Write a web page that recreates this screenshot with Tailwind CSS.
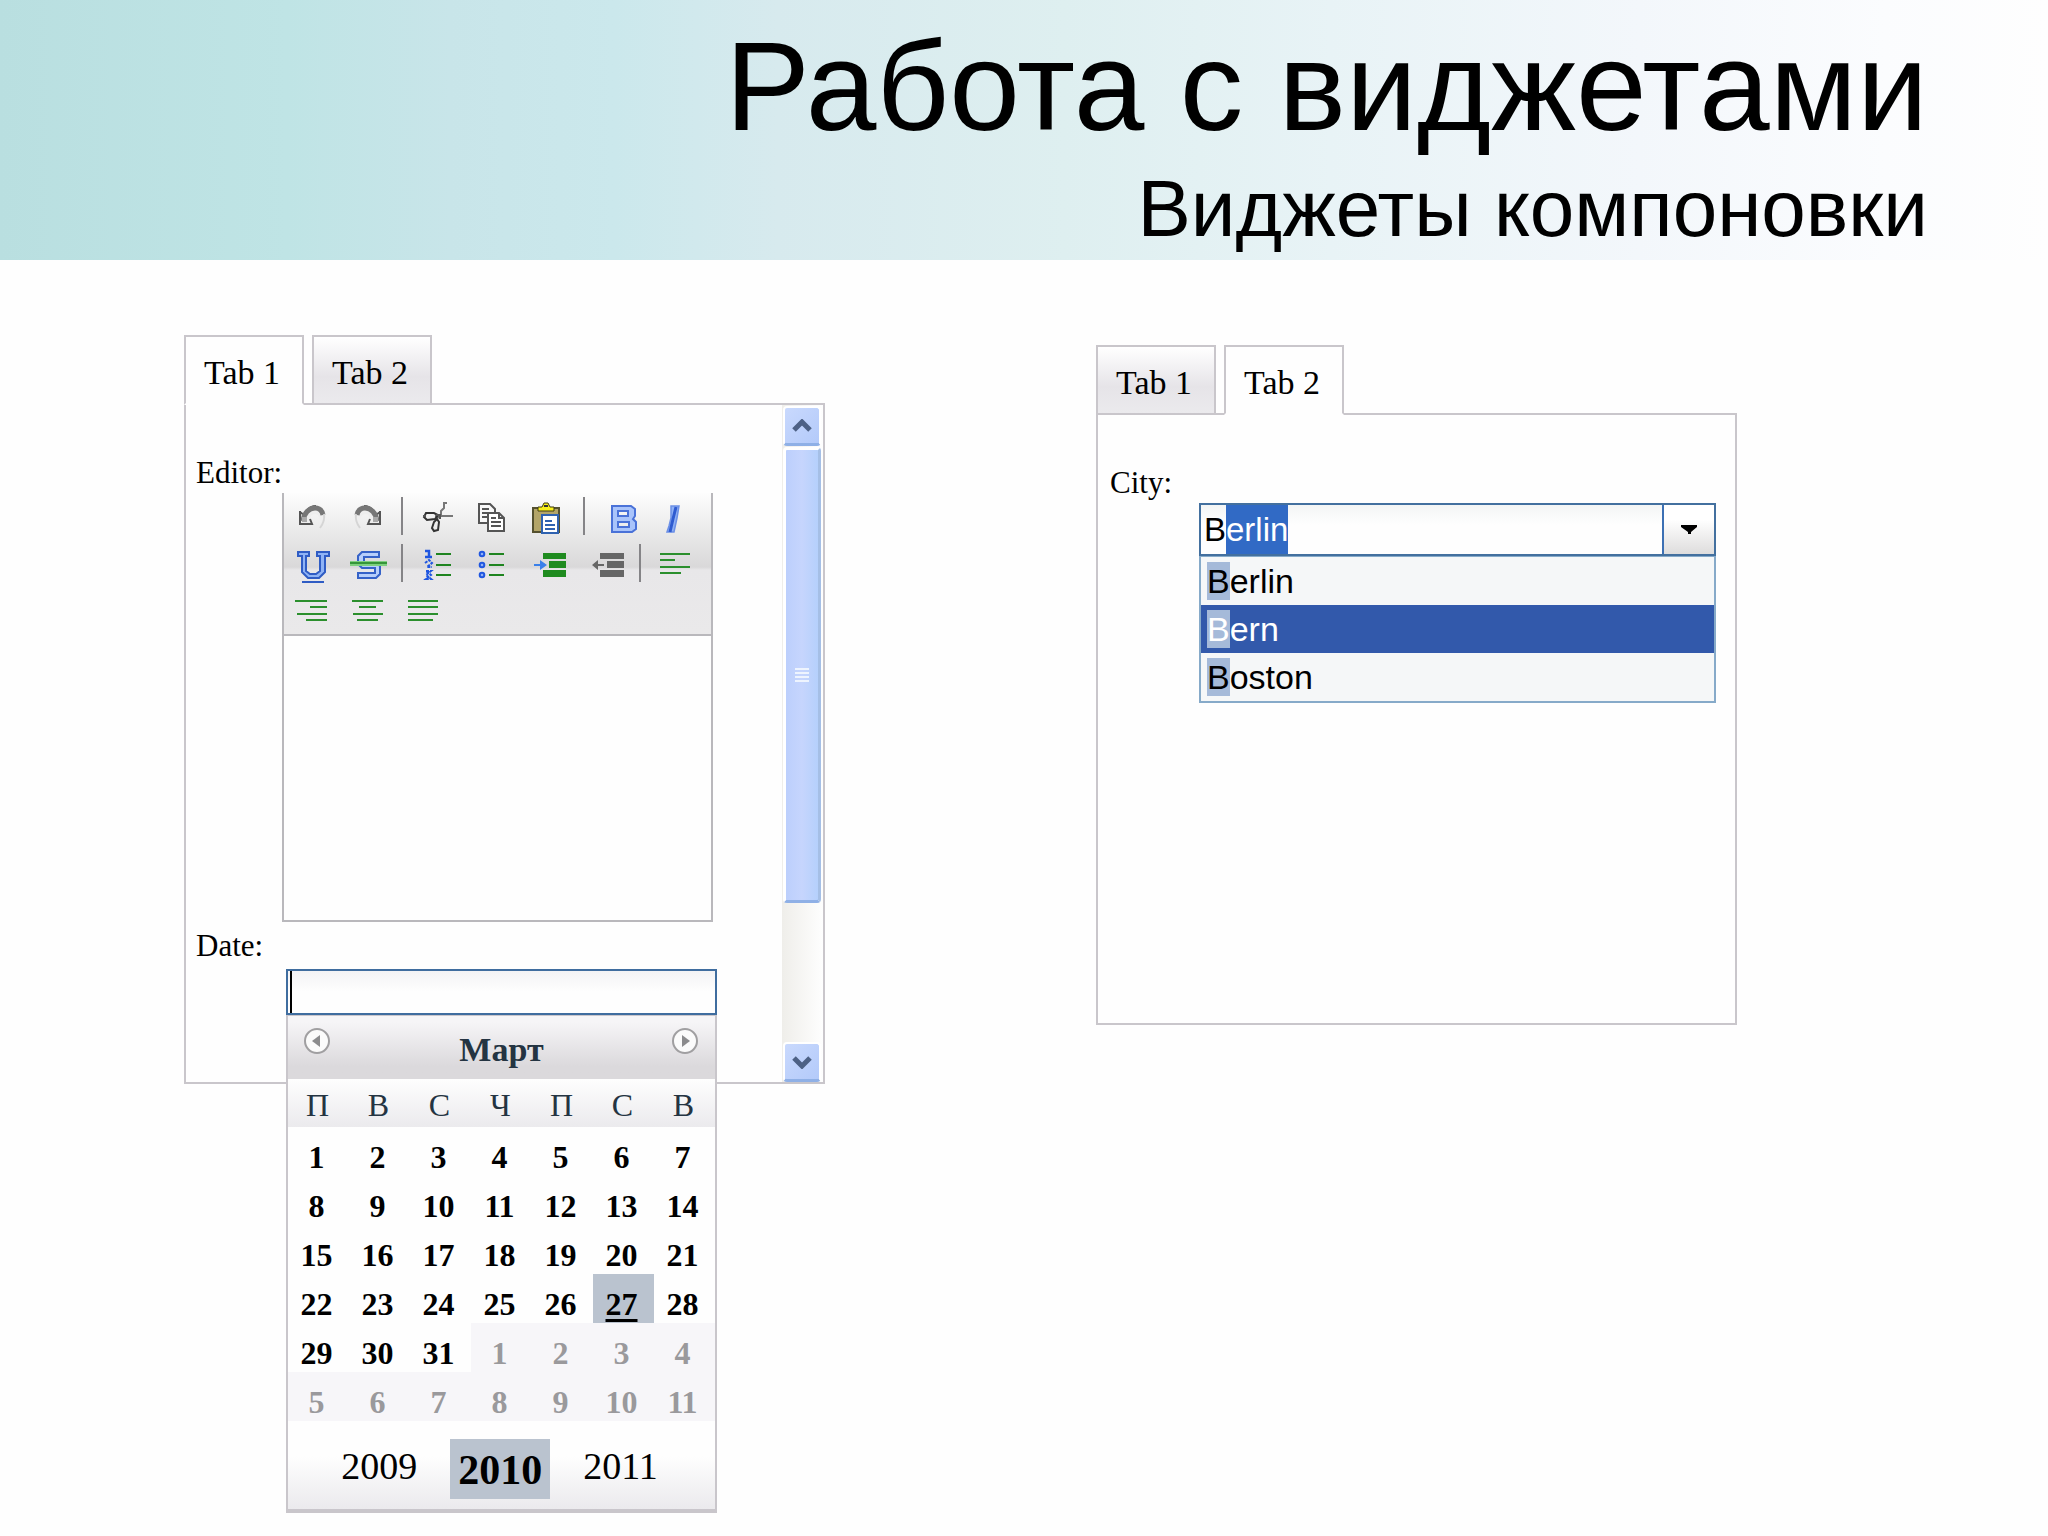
<!DOCTYPE html>
<html lang="ru">
<head>
<meta charset="utf-8">
<meta name="viewport" content="width=device-width, initial-scale=1">
<title>Работа с виджетами</title>
<script src="https://cdn.jsdelivr.net/npm/@tailwindcss/browser@4"></script>
</head>
<body class="min-h-screen bg-[#fefefe] text-black font-['Liberation_Serif','Times_New_Roman',serif] text-[32px]">

<header class="h-[260px] pt-[14px] pr-[120px] text-right font-['Liberation_Sans',Arial,sans-serif] bg-[linear-gradient(90deg,#b9dfe0_0%,#bfe4e5_14%,#c8e5e9_22%,#cbe8ec_30%,#d7eaee_38%,#deeff0_52%,#e8f3f6_65%,#f3f7fb_80%,#fbfcfe_92%,#fefefe_100%)]">
  <h1 class="text-[127px] leading-[144px]">Работа с виджетами</h1>
  <h2 class="mt-[6px] text-[80px] leading-[90px]">Виджеты компоновки</h2>
</header>

<main class="grid grid-cols-2 items-start pt-[75px] pl-[184px] pr-[40px]">

  <section class="w-full max-w-[641px]">
    <div role="tablist" class="relative z-10 -mb-[2px] flex gap-2">
      <button role="tab" aria-selected="true" class="h-[70px] w-[120px] border-2 border-[#c9c6cb] border-b-[#fefefe] bg-[#fefefe] pt-1 pr-1 text-[34px]">Tab 1</button>
      <button role="tab" aria-selected="false" class="h-[70px] w-[120px] border-2 border-[#c9c6cb] bg-linear-to-b from-white via-[#e6e4e8] via-60% to-[#ebeaed] pt-1 pr-1 text-[34px]">Tab 2</button>
    </div>
    <div role="tabpanel" class="flex min-h-[681px] border-2 border-[#c9c6cb]">
      <div class="flex-1 pt-12 pl-[10px]">
        <label for="editor" class="block text-[31px] leading-10">Editor:</label>
        <div class="ml-[86px] w-[431px] border-2 border-t-0 border-[#b9b8bc]">
          <div role="toolbar" class="h-[143px] border-b-2 border-[#b9b8bc] bg-[linear-gradient(180deg,#fdfdfd_0px,#d9d8d9_74px,#e8e7e9_77px,#eae9ea_100%)]">
            <div class="flex h-[46px]">
              <button class="w-14" aria-label="Undo"><svg width="56" height="47" viewBox="0 0 56 47" fill="none"><path d="M16 19l3 3c2-6 7-9 13-9 6 0 9 5 9 11-1 6-3 10-5 12 1-8 0-14-5-15-3 0-5 3-5 5l2 4H16z" fill="#eee"/><path d="M16 18v13h12l-2-5M16 19l4 3c3-6 7-9 12-9" stroke="#555" stroke-width="2"/><path d="M19 28c1-8 6-13 12-13 4 0 7 2 8 7" stroke="#777" stroke-width="5"/><path d="M40 21c1 6-1 10-4 14" stroke="#d5d5d5" stroke-width="2"/><path d="M18 24h5v5h-5z" fill="#aaa"/></svg></button>
              <button class="w-14" aria-label="Redo"><svg width="56" height="47" viewBox="0 0 56 47" fill="none"><g transform="matrix(-1 0 0 1 56 0)"><path d="M16 19l3 3c2-6 7-9 13-9 6 0 9 5 9 11-1 6-3 10-5 12 1-8 0-14-5-15-3 0-5 3-5 5l2 4H16z" fill="#eee"/><path d="M16 18v13h12l-2-5M16 19l4 3c3-6 7-9 12-9" stroke="#555" stroke-width="2"/><path d="M19 28c1-8 6-13 12-13 4 0 7 2 8 7" stroke="#777" stroke-width="5"/><path d="M40 21c1 6-1 10-4 14" stroke="#d5d5d5" stroke-width="2"/><path d="M18 24h5v5h-5z" fill="#aaa"/></g></svg></button>
              <span class="flex w-3 items-center justify-center"><i class="h-[38px] w-[2px] bg-[#858487]"></i></span>
              <button class="w-14" aria-label="Cut"><svg width="56" height="47" viewBox="0 0 56 47" fill="none"><path d="M39 10h-3v5l-3 3v5l-4 2" stroke="#777" stroke-width="2"/><path d="M45 23H27" stroke="#777" stroke-width="2"/><path d="M18 20h8l4 2-3 4-8 1-3-3z" stroke="#333" stroke-width="2"/><path d="M29 26l2 3-1 8-4 1-2-3 2-6z" stroke="#333" stroke-width="2"/><path d="M15 23h3M28 22h4v4" stroke="#555" stroke-width="2"/></svg></button>
              <button class="w-14" aria-label="Copy"><svg width="56" height="47" viewBox="0 0 56 47"><path d="M15 11h11l5 5v14H15z" fill="#f8f8f8" stroke="#555" stroke-width="2"/><path d="M18 16h7M18 20h7M18 24h5" stroke="#555" stroke-width="2"/><path d="M24 20h11l5 5v13H24z" fill="#fff" stroke="#555" stroke-width="2"/><path d="M35 20v5h5M27 25h5M27 29h10M27 33h10" fill="none" stroke="#555" stroke-width="2"/></svg></button>
              <button class="w-14" aria-label="Paste"><svg width="56" height="47" viewBox="0 0 56 47"><path d="M13 15h26v24H13z" fill="#b3a568" stroke="#55512f" stroke-width="2"/><path d="M18 18v-4h4l2-4h4l2 4h4v4z" fill="#f7ef1c" stroke="#3e3b12" stroke-width="1"/><path d="M24 13h4" stroke="#333" stroke-width="2"/><path d="M22 22h16v18H22z" fill="#fff" stroke="#2f62b0" stroke-width="2"/><path d="M25 28h7M25 32h10M25 36h10" stroke="#2f62b0" stroke-width="2"/></svg></button>
              <span class="flex w-4 items-center justify-center"><i class="h-[38px] w-[2px] bg-[#858487]"></i></span>
              <button class="w-14" aria-label="Bold"><svg width="56" height="47" viewBox="0 0 56 47"><path fill-rule="evenodd" d="M20 13h19l4 3v7l-2 3 3 3v7l-4 3H20zM26 18v5h10v-5zM26 29v5h11v-5z" fill="#a9c4fb" stroke="#4a72d8" stroke-width="2"/></svg></button>
              <button class="w-14" aria-label="Italic"><svg width="56" height="47" viewBox="0 0 56 47"><path d="M23 13h8l-2 12-3 14h-7l2-6 2-8z" fill="#8fb0f4" stroke="#6c90e6" stroke-width="1.5"/><path d="M28 14l-3 12-3 13" stroke="#2f5bd0" stroke-width="3" fill="none"/></svg></button>
            </div>
            <div class="flex h-[47px]">
              <button class="w-14" aria-label="Underline"><svg width="56" height="47" viewBox="0 0 56 47"><path d="M14 13h11v4h-3v15l4 3h6l4-3V17h-3v-4h12v4h-4v16l-6 6H24l-6-6V17h-4z" fill="#8fb3f5" stroke="#2f5cc4" stroke-width="2"/><path d="M18 43h22" stroke="#2f5cc4" stroke-width="2"/></svg></button>
              <button class="w-14" aria-label="Strikethrough"><svg width="56" height="47" viewBox="0 0 56 47"><path d="M22 13h17v5H24v5h11l5 4v8l-4 4H18v-5h17v-5H22l-4-4v-8z" fill="#b7cffb" stroke="#3562c8" stroke-width="2"/><path d="M10 22h37v5H10z" fill="#7fd080"/><path d="M10 23h37v2H10z" fill="#36963a"/></svg></button>
              <span class="flex w-3 items-center justify-center"><i class="h-[38px] w-[2px] bg-[#858487]"></i></span>
              <button class="w-14" aria-label="Numbered list"><svg width="56" height="47" viewBox="0 0 56 47" fill="none"><path d="M28 15h15M28 26h15M28 36h15" stroke="#1f8420" stroke-width="2"/><path d="M17 12h4v6M17 18h7" stroke="#1f56e0" stroke-width="2.5"/><path d="M17 24l4-3 3 3-5 4h5M18 32h5l-5 4 5 4h-5l5-4z" stroke="#1f56e0" stroke-width="2" stroke-dasharray="3 1"/></svg></button>
              <button class="w-14" aria-label="Bulleted list"><svg width="56" height="47" viewBox="0 0 56 47"><path d="M25 15h15M25 26h15M25 36h15" stroke="#1f8420" stroke-width="2"/><g fill="#8fb0f7" stroke="#1f56e0" stroke-width="2"><circle cx="18" cy="15" r="2.3"/><circle cx="18" cy="26" r="2.3"/><circle cx="18" cy="36" r="2.3"/></g></svg></button>
              <button class="w-14" aria-label="Indent"><svg width="56" height="47" viewBox="0 0 56 47"><path d="M23 14h23v6H23zM29 22h17v7H29zM23 31h23v7H23z" fill="#1f8b1f"/><path d="M14 25h6v-4l7 5-7 5v-4h-6z" fill="#3a80ea"/></svg></button>
              <button class="w-14" aria-label="Outdent"><svg width="56" height="47" viewBox="0 0 56 47"><path d="M24 14h24v6H24zM31 22h17v7H31zM24 31h24v7H24z" fill="#666"/><path d="M28 25h-6v-4l-6 5 6 5v-4h6z" fill="#666"/></svg></button>
              <span class="flex w-4 items-center justify-center"><i class="h-[38px] w-[2px] bg-[#858487]"></i></span>
              <button class="w-14" aria-label="Align left"><svg width="56" height="47" viewBox="0 0 56 47"><path d="M12 15h30M12 21h15M12 28h30M12 34h21" stroke="#2b8f2d" stroke-width="2"/></svg></button>
            </div>
            <div class="flex h-[47px]">
              <button class="w-14" aria-label="Align right"><svg width="56" height="47" viewBox="0 0 56 47"><path d="M11 15h32M26 21h17M13 28h30M22 34h21" stroke="#2b8f2d" stroke-width="2"/></svg></button>
              <button class="w-14" aria-label="Align center"><svg width="56" height="47" viewBox="0 0 56 47"><path d="M12 15h31M19 21h17M13 28h30M17 34h21" stroke="#2b8f2d" stroke-width="2"/></svg></button>
              <button class="w-14" aria-label="Justify"><svg width="56" height="47" viewBox="0 0 56 47"><path d="M12 15h30M12 21h30M12 28h30M12 34h25" stroke="#2b8f2d" stroke-width="2"/></svg></button>
            </div>
          </div>
          <textarea id="editor" class="block h-[284px] w-full resize-none bg-[#fefefe] p-2 outline-none"></textarea>
        </div>

        <label for="date" class="mt-1 block text-[31px] leading-10">Date:</label>
        <div class="relative mt-[3px] ml-[90px] w-[431px]">
          <input id="date" type="text" autocomplete="off" class="block h-[46px] w-full border-2 border-[#3f6d9f] bg-linear-to-b from-[#f3f3f5] to-[#fefefe] to-50% px-1 outline-none">
          <span class="absolute top-[2px] left-1 h-[42px] w-[2px] bg-black"></span>

          <div class="absolute top-full left-0 z-20 w-full border-2 border-t-0 border-[#c9c6cb] bg-[#fefefe]">
            <div class="flex h-16 border-t border-[#c9c6cb] bg-linear-to-b from-[#f6f5f7] from-10% to-[#dbd9dc] to-80% text-[#243442]">
              <button class="flex w-[61px] justify-center pt-[11px] pr-1" aria-label="Предыдущий месяц"><svg width="28" height="28" viewBox="0 0 28 28"><circle cx="14" cy="14" r="12" fill="#fbfbfb" stroke="#a09fa1" stroke-width="2"/><path d="M17 8v12l-8-6z" fill="#8b8b8d"/></svg></button>
              <h3 class="flex-1 pt-1 text-center text-[34px] leading-[60px] font-bold">Март</h3>
              <button class="flex w-[61px] justify-center pt-[11px]" aria-label="Следующий месяц"><svg width="28" height="28" viewBox="0 0 28 28"><circle cx="14" cy="14" r="12" fill="#fbfbfb" stroke="#a09fa1" stroke-width="2"/><path d="M11 8v12l8-6z" fill="#8b8b8d"/></svg></button>
            </div>
            <table class="w-full table-fixed text-center">
              <thead class="bg-linear-to-b from-[#fefefe] to-[#ebeaed] text-[#243442]">
                <tr class="leading-11"><th class="pt-1 pr-[2px] font-normal">П</th><th class="pt-1 pr-[2px] font-normal">В</th><th class="pt-1 pr-[2px] font-normal">С</th><th class="pt-1 pr-[2px] font-normal">Ч</th><th class="pt-1 pr-[2px] font-normal">П</th><th class="pt-1 pr-[2px] font-normal">С</th><th class="pt-1 pr-[2px] font-normal">В</th></tr>
              </thead>
              <tbody id="days" class="leading-[37px] font-bold"></tbody>
            </table>
            <div class="flex h-[90px] items-start justify-center gap-[33px] border-b-2 border-[#c9c6cb] bg-linear-to-b from-[#fefefe] from-40% to-[#ebeaed] pt-[18px] pr-1 text-[38px] leading-[54px]">
              <button>2009</button>
              <button class="h-[60px] w-[100px] bg-[#bac3cf] pt-[2px] text-[42px] leading-[58px] font-bold">2010</button>
              <button>2011</button>
            </div>
          </div>
        </div>
      </div>

      <div class="flex w-[41px] flex-col bg-linear-to-r from-[#efeeea] to-[#fefefe] pt-px pr-px">
        <button class="mx-px flex h-10 items-center justify-center rounded-sm border-2 border-b-[3px] border-white border-b-[#8fb0e6] bg-linear-to-br from-[#c9d9fd] to-[#b3cafa]" aria-label="Вверх"><svg width="20" height="14" viewBox="0 0 20 14"><path d="M2 11l8-8 8 8" fill="none" stroke="#4d6185" stroke-width="5"/></svg></button>
        <div class="mx-px mt-px flex h-[456px] flex-col items-center justify-center gap-[2px] rounded-sm border-3 border-white border-r-[#a5bfe6] border-b-[#8fb0e6] bg-linear-to-r from-[#bccffc] via-[#c6d5fd] to-[#b5d0fc]">
          <i class="h-[2px] w-[14px] bg-[#eef4fe]"></i><i class="h-[2px] w-[14px] bg-[#eef4fe]"></i><i class="h-[2px] w-[14px] bg-[#eef4fe]"></i><i class="h-[2px] w-[14px] bg-[#eef4fe]"></i>
        </div>
        <button class="mx-px mt-auto flex h-10 items-center justify-center rounded-sm border-2 border-b-[3px] border-white border-b-[#8fb0e6] bg-linear-to-br from-[#c9d9fd] to-[#b3cafa]" aria-label="Вниз"><svg width="20" height="14" viewBox="0 0 20 14"><path d="M2 3l8 8 8-8" fill="none" stroke="#4d6185" stroke-width="5"/></svg></button>
      </div>
    </div>
  </section>

  <section class="mt-[10px] w-full max-w-[641px]">
    <div role="tablist" class="relative z-10 -mb-[2px] flex gap-2">
      <button role="tab" aria-selected="false" class="h-[70px] w-[120px] border-2 border-[#c9c6cb] bg-linear-to-b from-white via-[#e6e4e8] via-60% to-[#ebeaed] pt-1 pr-1 text-[34px]">Tab 1</button>
      <button role="tab" aria-selected="true" class="h-[70px] w-[120px] border-2 border-[#c9c6cb] border-b-[#fefefe] bg-[#fefefe] pt-1 pr-1 text-[34px]">Tab 2</button>
    </div>
    <div role="tabpanel" class="min-h-[612px] border-2 border-[#c9c6cb] pt-12 pl-3">
      <label for="city" class="block text-[31px] leading-10">City:</label>
      <div class="ml-[89px] w-[517px] font-['Liberation_Sans',Arial,sans-serif]">
        <div class="flex h-[53px] border-2 border-[#43709f]">
          <input id="city" type="text" value="Berlin" autocomplete="off" role="combobox" aria-expanded="true" aria-controls="cities" class="min-w-0 flex-1 bg-linear-to-b from-[#f3f5f5] to-[#fefefe] to-40% px-[3px] text-[33px] caret-transparent outline-none selection:bg-[#316ac5] selection:text-white">
          <button class="flex w-[52px] items-center justify-center border-l-2 border-[#3c70b4] bg-linear-to-b from-white from-30% to-[#dedddd]" aria-label="Открыть список"><svg width="16" height="9" viewBox="0 0 16 9"><path d="M0 0h16v2L10 7v2H7V7L0 2z"/></svg></button>
        </div>
        <ul id="cities" role="listbox" class="border-2 border-t border-[#86aac9] bg-[#f5f7f8] text-[34px] leading-12">
          <li role="option" class="h-12 pl-[6px]"><span class="bg-[#a5bad9]">B</span>erlin</li>
          <li role="option" aria-selected="true" class="h-12 bg-[#3259ab] pl-[6px] text-white"><span class="bg-[#a5bad9]">B</span>ern</li>
          <li role="option" class="h-12 pl-[6px]"><span class="bg-[#a5bad9]">B</span>oston</li>
        </ul>
      </div>
    </div>
  </section>
</main>

<script>
  // March 2010 starts on a Monday; the grid is filled up with the first days of April.
  const body = document.getElementById('days');
  for (let week = 0; week < 6; week++) {
    const row = body.insertRow();
    for (let d = 1; d <= 7; d++) {
      const n = week * 7 + d;
      const cell = row.insertCell();
      cell.textContent = n > 31 ? n - 31 : n;
      cell.className = n > 31 ? 'pt-3 pr-1 bg-[#f7f6f9] text-[#9a999c]'
        : n === 27 ? 'pt-3 pr-1 bg-[#bac3cf] underline decoration-3 underline-offset-4'
        : 'pt-3 pr-1';
    }
  }
  // Autocomplete keeps the typed letter and selects the rest of the match.
  const city = document.getElementById('city');
  city.focus();
  city.setSelectionRange(1, 6);
</script>
</body>
</html>
